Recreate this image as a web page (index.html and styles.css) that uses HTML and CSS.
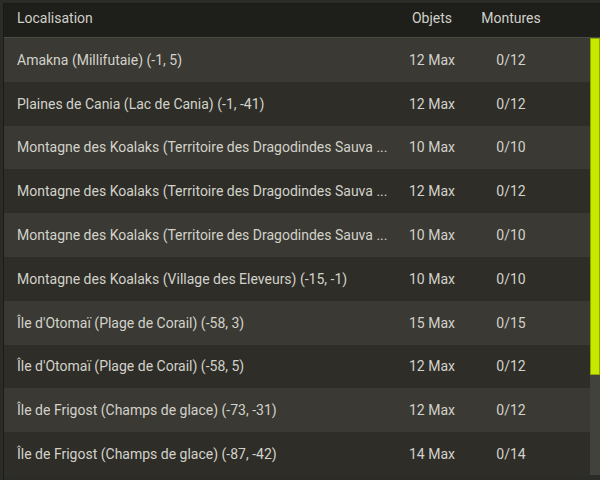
FILE: index.html
```html
<!DOCTYPE html>
<html>
<head>
<meta charset="utf-8">
<link rel="stylesheet" href="styles.css">
</head>
<body>
<div class="frame">
  <div class="panel">
    <div class="head row">
      <div class="name">Localisation</div>
      <div class="num">Objets</div>
      <div class="num">Montures</div>
    </div>
    <div class="body">
      <div class="list">
        <div class="row item light"><div class="name">Amakna (Millifutaie) (-1, 5)</div><div class="num">12 Max</div><div class="num">0/12</div></div>
        <div class="row item dark"><div class="name">Plaines de Cania (Lac de Cania) (-1, -41)</div><div class="num">12 Max</div><div class="num">0/12</div></div>
        <div class="row item light"><div class="name">Montagne des Koalaks (Territoire des Dragodindes Sauva ...</div><div class="num">10 Max</div><div class="num">0/10</div></div>
        <div class="row item dark"><div class="name">Montagne des Koalaks (Territoire des Dragodindes Sauva ...</div><div class="num">12 Max</div><div class="num">0/12</div></div>
        <div class="row item light"><div class="name">Montagne des Koalaks (Territoire des Dragodindes Sauva ...</div><div class="num">10 Max</div><div class="num">0/10</div></div>
        <div class="row item dark"><div class="name">Montagne des Koalaks (Village des Eleveurs) (-15, -1)</div><div class="num">10 Max</div><div class="num">0/10</div></div>
        <div class="row item light"><div class="name">Île d'Otomaï (Plage de Corail) (-58, 3)</div><div class="num">15 Max</div><div class="num">0/15</div></div>
        <div class="row item dark"><div class="name">Île d'Otomaï (Plage de Corail) (-58, 5)</div><div class="num">12 Max</div><div class="num">0/12</div></div>
        <div class="row item light"><div class="name">Île de Frigost (Champs de glace) (-73, -31)</div><div class="num">12 Max</div><div class="num">0/12</div></div>
        <div class="row item dark"><div class="name">Île de Frigost (Champs de glace) (-87, -42)</div><div class="num">14 Max</div><div class="num">0/14</div></div>
      </div>
      <div class="scroll">
        <div class="thumb"></div>
      </div>
    </div>
  </div>
</div>
</body>
</html>
```
FILE: styles.css
```css
html, body {
  margin: 0;
  padding: 0;
  width: 600px;
  height: 480px;
  overflow: hidden;
  background: #23221e;
}
.frame {
  height: 480px;
  padding-top: 3px;
  padding-left: 3px;
  background: #2b2b27;
  box-sizing: border-box;
  font-family: Roboto, "Liberation Sans", sans-serif;
  font-size: 14px;
  color: #d2d2ca;
}
.panel {
  height: 477px;
  border-left: 1px solid #1a1a16;
  border-top: 1px solid #1a1a16;
  box-sizing: border-box;
  display: flex;
  flex-direction: column;
}
.row {
  display: grid;
  grid-template-columns: 1fr 80px 78px 40px;
  align-items: center;
}
.head {
  height: 34px;
  flex: none;
  padding-right: 10px;
  padding-bottom: 6px;
  box-sizing: border-box;
  background: #1e1e1a;
  border-bottom: 1px solid #4a4a43;
  color: #d0d0c8;
}
.name {
  padding-left: 13px;
  white-space: nowrap;
}
.num {
  text-align: center;
  white-space: nowrap;
}
.body {
  flex: 1;
  display: flex;
  min-height: 0;
}
.list {
  flex: 1;
  display: flex;
  flex-direction: column;
}
.item {
  height: 43.8px;
  flex: none;
}
.item.light {
  background: #3a3933;
}
.item.dark {
  background: #2e2d28;
}
.scroll {
  width: 10px;
  flex: none;
  background: #42423c;
  margin-bottom: 5px;
  display: flex;
  flex-direction: column;
}
.thumb {
  height: 337px;
  background: #c8e800;
  border: 1px solid #8ea800;
  box-sizing: border-box;
}
```
